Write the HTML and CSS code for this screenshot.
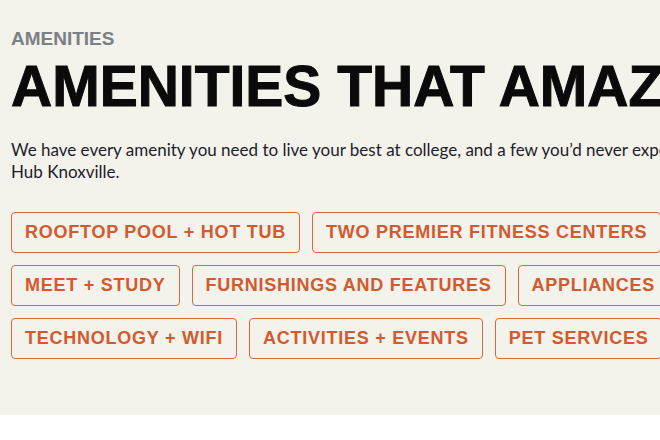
FILE: index.html
```html
<!DOCTYPE html>
<html>
<head>
<meta charset="utf-8">
<link rel="stylesheet" href="styles.css">
</head>
<body>
<section class="amenities">
  <p class="eyebrow">AMENITIES</p>
  <h1 class="title">AMENITIES THAT AMAZE</h1>
  <p class="lead">We have every amenity you need to live your best at college, and a few you’d never expect at The Hub Knoxville.</p>
  <div class="tags">
    <div class="row">
      <button class="tag">ROOFTOP POOL + HOT TUB</button>
      <button class="tag">TWO PREMIER FITNESS CENTERS</button>
    </div>
    <div class="row">
      <button class="tag">MEET + STUDY</button>
      <button class="tag">FURNISHINGS AND FEATURES</button>
      <button class="tag">APPLIANCES + KITCHEN</button>
    </div>
    <div class="row">
      <button class="tag">TECHNOLOGY + WIFI</button>
      <button class="tag">ACTIVITIES + EVENTS</button>
      <button class="tag">PET SERVICES</button>
    </div>
  </div>
</section>
</body>
</html>
```
FILE: styles.css
```css
html, body {
  margin: 0;
  padding: 0;
  background: #ffffff;
  overflow: hidden;
}
.amenities {
  background: #f3f2eb;
  height: 415px;
  padding: 28px 0 0 11px;
  box-sizing: border-box;
  overflow: hidden;
  width: 1000px;
}
.eyebrow {
  margin: 0;
  font-family: "Liberation Sans", Arial, sans-serif;
  font-weight: 700;
  font-size: 19px;
  line-height: 22px;
  color: #7b7f86;
}
.title {
  margin: 6px 0 0;
  font-family: "Liberation Sans", Arial, sans-serif;
  font-weight: 700;
  font-size: 57px;
  line-height: 60px;
  color: #0a0a0a;
  white-space: nowrap;
  -webkit-text-stroke: 1px #0a0a0a;
}
.lead {
  margin: 23px 0 0;
  width: 730px;
  font-family: Lato, sans-serif;
  font-size: 17px;
  line-height: 22px;
  color: #1d1d2b;
}
.tags {
  margin-top: 29px;
  display: flex;
  flex-direction: column;
  gap: 12px;
}
.row {
  display: flex;
  gap: 12px;
}
.tag {
  flex: none;
  margin: 0;
  padding: 10px 13px 10px;
  background: transparent;
  border: 1px solid #d8683f;
  border-radius: 4px;
  font-family: "Liberation Sans", Arial, sans-serif;
  font-weight: 700;
  font-size: 18px;
  line-height: 19px;
  letter-spacing: 0.75px;
  color: #d25a2f;
  white-space: nowrap;
}
```
